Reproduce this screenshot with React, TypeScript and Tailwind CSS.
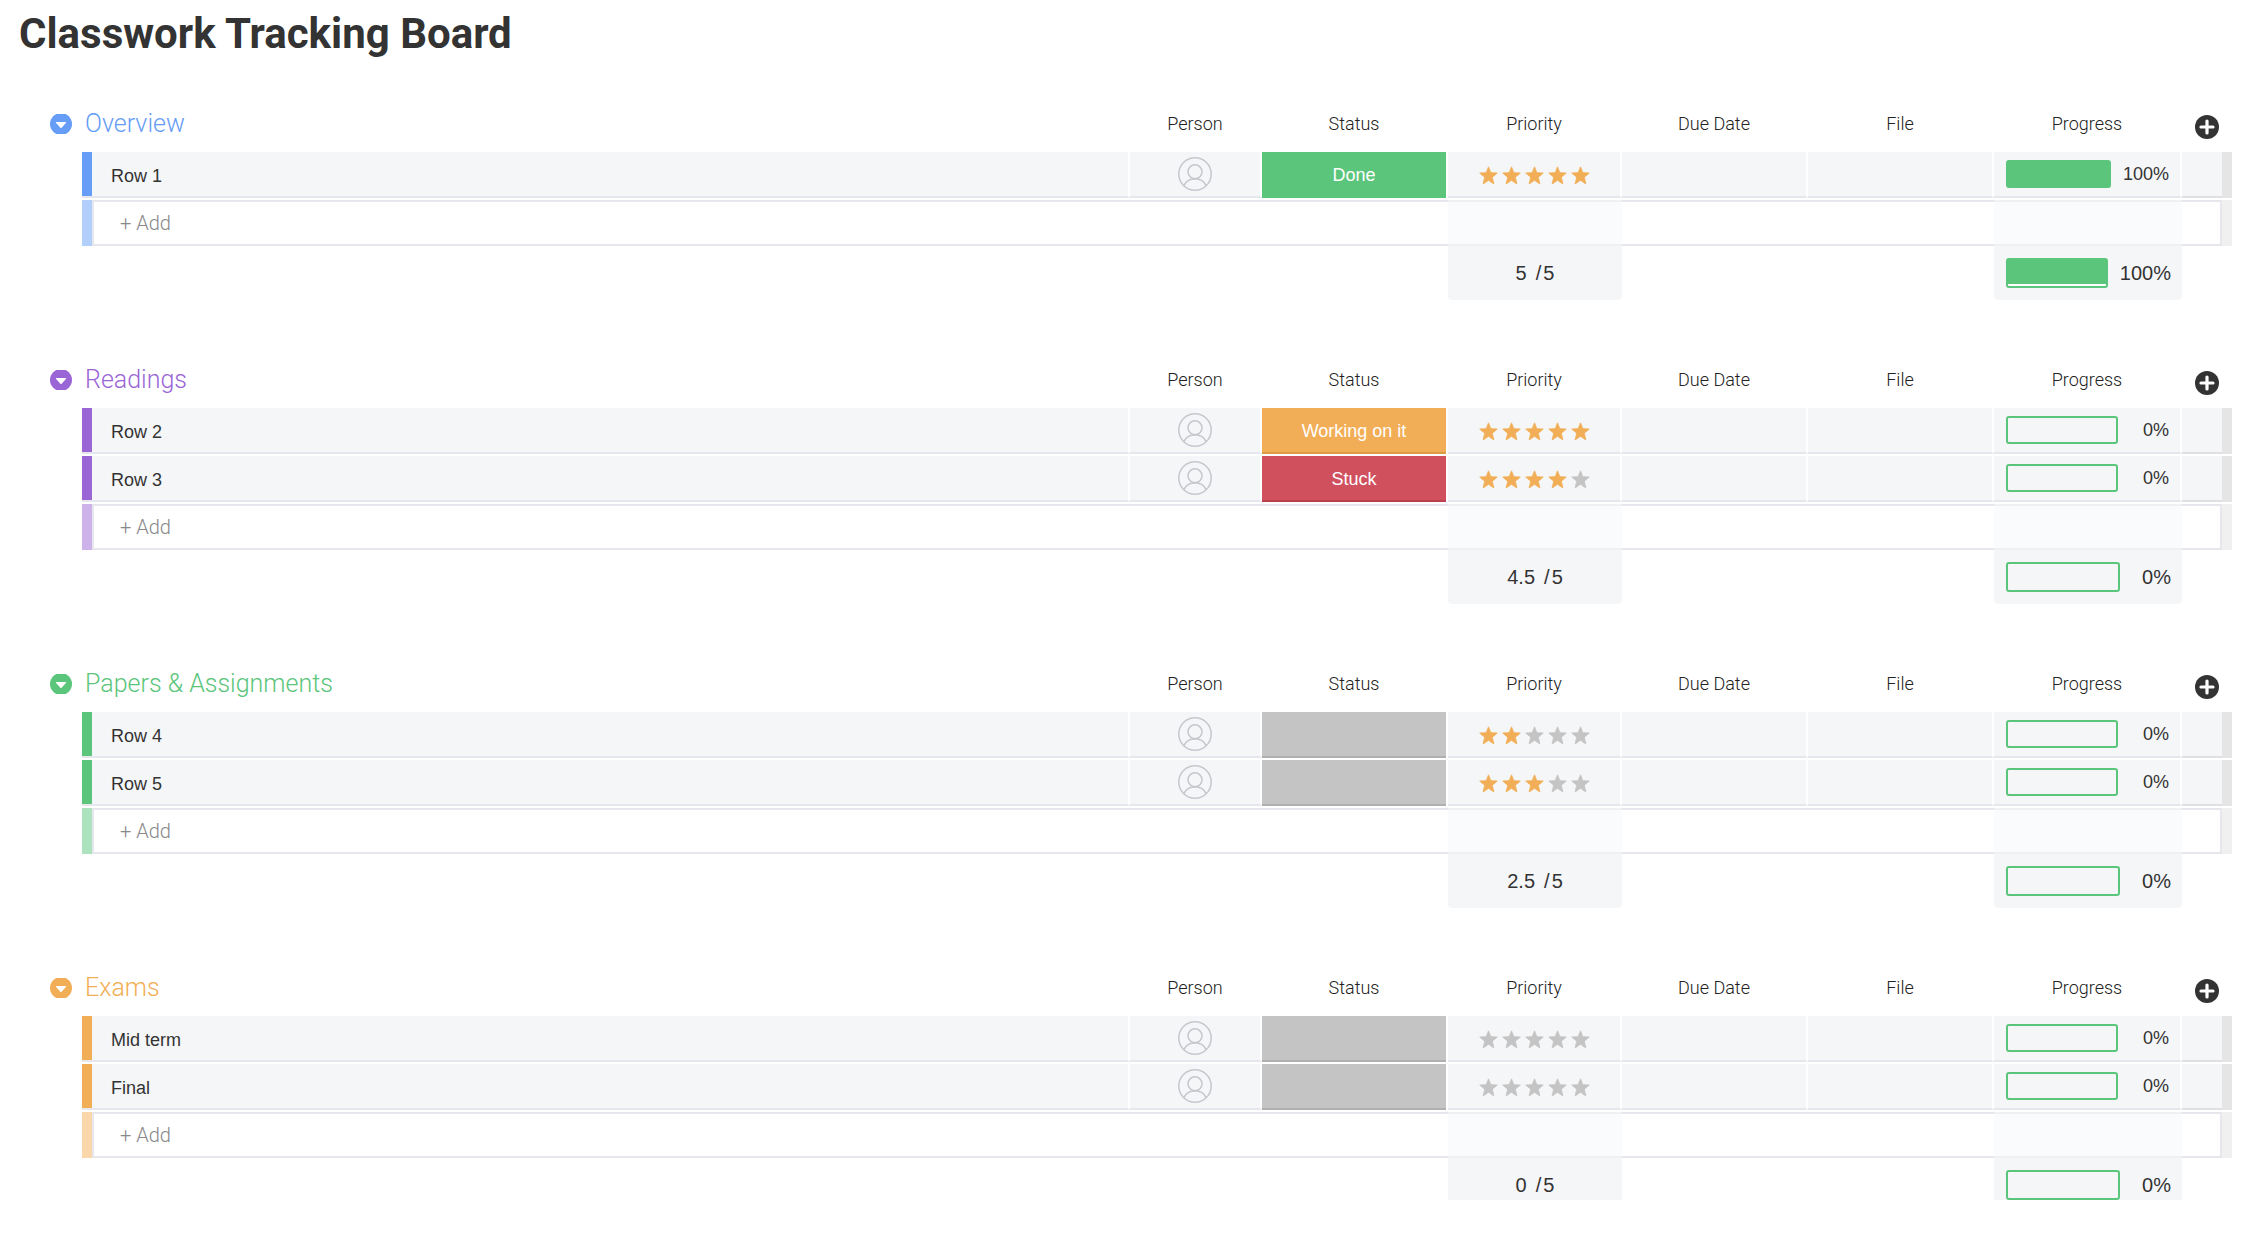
import { useState } from "react";

type StatusKind = "done" | "working" | "stuck" | "empty";

type BoardRow = {
  name: string;
  status: StatusKind;
  stars: number;
  progress: number;
};

type BoardGroup = {
  id: string;
  title: string;
  textClass: string;
  barClass: string;
  barLightClass: string;
  average: string;
  progress: number;
  rows: BoardRow[];
};

const GRID =
  "grid grid-cols-[10px_minmax(0,1fr)_132px_186px_174px_186px_186px_188px_40px_10px]";

const COLUMNS = ["Person", "Status", "Priority", "Due Date", "File", "Progress"];

const CELL = "h-[46px] border-b-2 border-r-2 border-b-[#e6e7ed] border-r-white bg-[#f5f6f8]";

const STATUSES: Record<StatusKind, { label: string; className: string }> = {
  done: { label: "Done", className: "bg-[#5bc57c] border-[#5bc57c]" },
  working: { label: "Working on it", className: "bg-[#f2ae56] border-[#dc9b46]" },
  stuck: { label: "Stuck", className: "bg-[#d0505e] border-[#b9404d]" },
  empty: { label: "", className: "bg-[#c4c4c4] border-[#afafaf]" },
};

const GROUPS: BoardGroup[] = [
  {
    id: "overview",
    title: "Overview",
    textClass: "text-[#669df6]",
    barClass: "bg-[#669df6]",
    barLightClass: "bg-[#b2cefa]",
    average: "5",
    progress: 100,
    rows: [{ name: "Row 1", status: "done", stars: 5, progress: 100 }],
  },
  {
    id: "readings",
    title: "Readings",
    textClass: "text-[#9a66d6]",
    barClass: "bg-[#9a66d6]",
    barLightClass: "bg-[#cdb3ea]",
    average: "4.5",
    progress: 0,
    rows: [
      { name: "Row 2", status: "working", stars: 5, progress: 0 },
      { name: "Row 3", status: "stuck", stars: 4, progress: 0 },
    ],
  },
  {
    id: "papers",
    title: "Papers & Assignments",
    textClass: "text-[#5bc57c]",
    barClass: "bg-[#5bc57c]",
    barLightClass: "bg-[#ade2be]",
    average: "2.5",
    progress: 0,
    rows: [
      { name: "Row 4", status: "empty", stars: 2, progress: 0 },
      { name: "Row 5", status: "empty", stars: 3, progress: 0 },
    ],
  },
  {
    id: "exams",
    title: "Exams",
    textClass: "text-[#f2ae56]",
    barClass: "bg-[#f2ae56]",
    barLightClass: "bg-[#f9d7ab]",
    average: "0",
    progress: 0,
    rows: [
      { name: "Mid term", status: "empty", stars: 0, progress: 0 },
      { name: "Final", status: "empty", stars: 0, progress: 0 },
    ],
  },
];

function ChevronIcon() {
  return (
    <svg width="22" height="20" viewBox="0 0 22 20" aria-hidden>
      <circle cx="11" cy="10" r="11" fill="currentColor" />
      <path d="M6.4 8h9.2a.5.5 0 0 1 .3.9l-4.3 4.8a.8.8 0 0 1-1.2 0L6.1 8.9a.5.5 0 0 1 .3-.9z" fill="#fff" />
    </svg>
  );
}

function PlusIcon() {
  return (
    <svg width="24" height="24" viewBox="0 0 24 24" aria-hidden>
      <circle cx="12" cy="12" r="12" fill="#333" />
      <path d="M12 6v12M6 12h12" stroke="#fff" strokeWidth="3.2" strokeLinecap="round" />
    </svg>
  );
}

function PersonIcon() {
  return (
    <svg width="34" height="34" viewBox="0 0 34 34" fill="none" stroke="#c5c7cc" strokeWidth="1.5" aria-hidden>
      <circle cx="17" cy="17" r="16.2" />
      <circle cx="17" cy="14.8" r="7" />
      <path d="M5.8 28.7C8 24.4 12 21.8 17 21.8s9 2.6 11.2 6.9" />
    </svg>
  );
}

function Star({ filled }: { filled: boolean }) {
  return (
    <svg
      width="19"
      height="19"
      viewBox="0 0 18 18"
      className={filled ? "text-[#f2ae56]" : "text-[#c4c4c4]"}
      aria-hidden
    >
      <path
        d="M9 .8l2.2 5.5 6.1.4-4.7 3.9 1.5 6.4L9 13.6 3.9 17l1.5-6.4L.7 6.7l6.1-.4z"
        fill="currentColor"
        stroke="currentColor"
        strokeWidth=".8"
        strokeLinejoin="round"
      />
    </svg>
  );
}

function StatusCell({ kind }: { kind: StatusKind }) {
  const { label, className } = STATUSES[kind];
  return (
    <td className="h-[46px] pr-0.5">
      <button
        type="button"
        aria-label={label || "Set status"}
        className={`h-full w-full border-b-2 pt-0.5 text-center text-lg text-white ${className}`}
      >
        {label}
      </button>
    </td>
  );
}

function ProgressBar({ value, large = false }: { value: number; large?: boolean }) {
  return (
    <div className={`flex items-center justify-between gap-3 ${large ? "text-xl" : "text-lg"}`}>
      <div
        role="progressbar"
        aria-label="Progress"
        aria-valuenow={value}
        className={`flex-1 rounded-[3px] border-2 border-[#5bc57c] ${
          large ? "h-[30px] max-w-[114px] pb-0.5" : "h-7 max-w-28"
        } ${large && value > 0 ? "bg-white" : ""}`}
      >
        <div className="h-full bg-[#5bc57c]" style={{ width: `${value}%` }} />
      </div>
      <span className="leading-7">{value}%</span>
    </div>
  );
}

function GroupTable({ group, isLast }: { group: BoardGroup; isLast: boolean }) {
  const [open, setOpen] = useState(true);
  const summaryClass = isLast ? "h-[42px]" : "h-[54px] rounded-b";

  return (
    <table className="mt-16 block w-full first:mt-0">
      <thead className="block">
        <tr className={`${GRID} h-11 items-start`}>
          <th scope="col" colSpan={2} className="col-span-2 h-8 text-left font-normal">
            <button
              type="button"
              aria-expanded={open}
              onClick={() => setOpen(!open)}
              className={`flex h-8 items-center gap-[13px] font-['Roboto',sans-serif] text-[25px] font-light leading-8 ${group.textClass}`}
            >
              <ChevronIcon />
              {group.title}
            </button>
          </th>
          {COLUMNS.map((column) => (
            <th
              key={column}
              scope="col"
              className="h-8 pr-0.5 text-center font-['Roboto',sans-serif] text-lg font-light leading-8 text-[#222]"
            >
              {column}
            </th>
          ))}
          <th scope="col" className="h-[38px]">
            <button type="button" aria-label="Add column" className="flex h-[38px] w-full items-center justify-center pl-2.5">
              <PlusIcon />
            </button>
          </th>
        </tr>
      </thead>
      {open ? (
        <tbody className="block">
          {group.rows.map((row) => (
            <tr key={row.name} className={`${GRID} mb-0.5 pl-8`}>
              <td className={`border-b-2 border-[#e6e7ed] ${group.barClass}`} />
              <td className={`${CELL} truncate pl-[19px] pt-0.5 text-lg leading-[44px]`}>{row.name}</td>
              <td className={`${CELL} flex items-center justify-center`}>
                <PersonIcon />
              </td>
              <StatusCell kind={row.status} />
              <td className={`${CELL} flex items-center justify-center gap-1 pt-0.5`}>
                {[1, 2, 3, 4, 5].map((n) => (
                  <Star key={n} filled={n <= row.stars} />
                ))}
              </td>
              <td className={CELL} />
              <td className={CELL} />
              <td className={`${CELL} pl-3 pr-[11px] pt-2`}>
                <ProgressBar value={row.progress} />
              </td>
              <td className="border-b-2 border-[#e0e0e3] bg-[#f5f6f8]" />
              <td className="bg-[#e5e5e5]" />
            </tr>
          ))}
          <tr className={`${GRID} h-[46px] pl-8`}>
            <td className={group.barLightClass} />
            <td colSpan={3} className="col-span-3 border-y-2 border-l-2 border-[#e6e7ed] pl-[26px]">
              <input
                type="text"
                placeholder="+ Add"
                aria-label={`Add row to ${group.title}`}
                className="h-full w-full bg-transparent font-['Roboto',sans-serif] text-xl font-light outline-none placeholder:text-[#888]"
              />
            </td>
            <td className="border-y-2 border-[#eff0f4] bg-[#fafbfd]" />
            <td colSpan={2} className="col-span-2 border-y-2 border-[#e6e7ed]" />
            <td className="border-y-2 border-[#eff0f4] bg-[#fafbfd]" />
            <td className="border-y-2 border-r-2 border-[#e6e7ed]" />
            <td className="bg-[#f0f0f0]" />
          </tr>
          <tr className={`${GRID} pl-8`}>
            <td colSpan={4} className="col-span-4" />
            <td className={`${summaryClass} flex items-start justify-center bg-[#f5f6f8] pt-3 text-xl leading-[30px]`}>
              <span>{group.average}</span>
              <span className="pl-[9px] pr-0.5">/</span>
              <span>5</span>
            </td>
            <td colSpan={2} className="col-span-2" />
            <td className={`${summaryClass} bg-[#f5f6f8] pl-3 pr-[11px] pt-3`}>
              <ProgressBar value={group.progress} large />
            </td>
          </tr>
        </tbody>
      ) : null}
    </table>
  );
}

export default function App() {
  return (
    <main className="min-h-screen bg-white pb-8 font-['Liberation_Sans',Arial,sans-serif] text-[#333]">
      <h1 className="px-[19px] pt-[9px] font-['Roboto',sans-serif] text-[42px] font-bold leading-[50px]">
        Classwork Tracking Board
      </h1>
      <div className="pl-[50px] pr-[30px] pt-[49px]">
        {GROUPS.map((group, index) => (
          <GroupTable key={group.id} group={group} isLast={index === GROUPS.length - 1} />
        ))}
      </div>
    </main>
  );
}
